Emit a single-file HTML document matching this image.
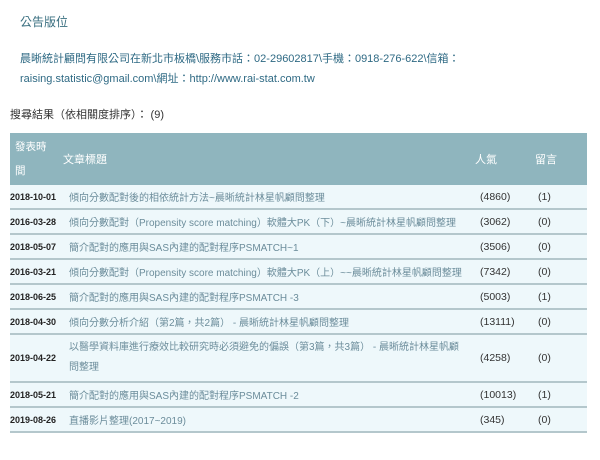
<!DOCTYPE html>
<html><head><meta charset="utf-8"><style>
body{margin:0;width:600px;height:460px;background:#fff;font-family:"Liberation Sans","Noto Sans CJK TC",sans-serif;overflow:hidden;position:relative}
.t{position:absolute;white-space:nowrap}
table{position:absolute;left:10px;top:133px;width:577px;border-collapse:collapse;table-layout:fixed}
th{background:#8fb5be;color:#fff;font-weight:normal;font-size:11px;text-align:left;height:52px;padding:0;vertical-align:middle}
td{background:#eef8fb;border-bottom:2px solid #b4c7cc;font-size:10px;color:#6c8d9b;height:23px;padding:0;vertical-align:middle;white-space:nowrap}
td.d{font-weight:bold;color:#222;font-size:9px}
td.v,td.c{color:#333;font-size:10.5px}
</style></head><body>
<div class="t" style="left:20px;top:13px;font-size:12px;color:#3a6f80">公告版位</div>
<div class="t" style="left:20px;top:50px;font-size:11px;color:#2f6a84">晨晰統計顧問有限公司在新北市板橋\服務市話：02-29602817\手機：0918-276-622\信箱：</div>
<div class="t" style="left:20px;top:70px;font-size:11px;color:#2f6a84">raising.statistic@gmail.com\網址：http://www.rai-stat.com.tw</div>
<div class="t" style="left:10px;top:106px;font-size:11px;color:#333">搜尋結果（依相關度排序）： (9)</div>
<table>
<colgroup><col style="width:59px"><col style="width:411px"><col style="width:58px"><col></colgroup>
<tr><th style="padding-left:5px;line-height:24px;font-size:10.5px">發表時<br>間</th><th><span style="position:relative;left:-6px">文章標題</span></th><th><span style="position:relative;left:-5px">人氣</span></th><th><span style="position:relative;left:-3px">留言</span></th></tr>
<tr><td class="d">2018-10-01</td><td>傾向分數配對後的相依統計方法~晨晰統計林星帆顧問整理</td><td class="v">(4860)</td><td class="c">(1)</td></tr>
<tr><td class="d">2016-03-28</td><td>傾向分數配對（Propensity score matching）軟體大PK（下）~晨晰統計林星帆顧問整理</td><td class="v">(3062)</td><td class="c">(0)</td></tr>
<tr><td class="d">2018-05-07</td><td>簡介配對的應用與SAS內建的配對程序PSMATCH~1</td><td class="v">(3506)</td><td class="c">(0)</td></tr>
<tr><td class="d">2016-03-21</td><td>傾向分數配對（Propensity score matching）軟體大PK（上）~~晨晰統計林星帆顧問整理</td><td class="v">(7342)</td><td class="c">(0)</td></tr>
<tr><td class="d">2018-06-25</td><td>簡介配對的應用與SAS內建的配對程序PSMATCH -3</td><td class="v">(5003)</td><td class="c">(1)</td></tr>
<tr><td class="d">2018-04-30</td><td>傾向分數分析介紹（第2篇，共2篇） - 晨晰統計林星帆顧問整理</td><td class="v">(13111)</td><td class="c">(0)</td></tr>
<tr><td class="d" style="height:46px">2019-04-22</td><td style="line-height:20px">以醫學資料庫進行療效比較研究時必須避免的偏誤（第3篇，共3篇） - 晨晰統計林星帆顧<br>問整理</td><td class="v">(4258)</td><td class="c">(0)</td></tr>
<tr><td class="d">2018-05-21</td><td>簡介配對的應用與SAS內建的配對程序PSMATCH -2</td><td class="v">(10013)</td><td class="c">(1)</td></tr>
<tr><td class="d">2019-08-26</td><td>直播影片整理(2017~2019)</td><td class="v">(345)</td><td class="c">(0)</td></tr>
</table>
</body></html>
